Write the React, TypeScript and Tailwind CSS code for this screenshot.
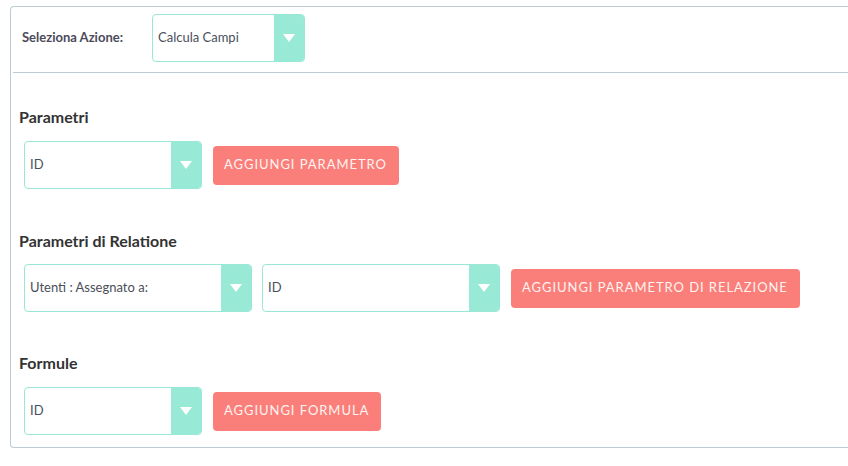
import React from "react";

const font = { fontFamily: "Lato, 'Noto Sans', sans-serif" };

function Select({ value, width }: { value: string; width: string }) {
  return (
    <div
      className={`flex h-[48px] ${width} overflow-hidden rounded-[4px] border border-[#98e8d5] bg-white`}
    >
      <div className="flex flex-1 items-center pl-[5px] text-[13px] text-[#4a4f5a]">
        {value}
      </div>
      <div className="flex w-[30px] items-center justify-center bg-[#98e9d6]">
        <svg width="12" height="8" viewBox="0 0 12 8">
          <path d="M0 0 H12 L6 8 Z" fill="#ffffff" />
        </svg>
      </div>
    </div>
  );
}

function AddButton({ label }: { label: string }) {
  return (
    <button className="h-[39px] rounded-[4px] bg-[#fa7f7a] pl-[11px] pr-[12px] text-[13px] tracking-[0.95px] text-[#fff3f1]">
      {label}
    </button>
  );
}

export default function App() {
  return (
    <div className="h-[466px] w-[848px] overflow-hidden bg-white" style={font}>
      <div className="ml-[10px] mt-[6px] w-[860px] rounded-bl-[4px] rounded-tl-[4px] border-b border-l border-t border-[#bccbd5]">
        {/* Header */}
        <div className="ml-[2px] flex h-[66px] items-start border-b border-[#bccbd5] pl-[9px] pt-[7px]">
          <div className="flex h-[48px] items-center">
            <div className="w-[130px] text-[13px] font-bold text-[#4a4a5a]">
              Seleziona Azione:
            </div>
            <Select value="Calcula Campi" width="w-[153px]" />
          </div>
        </div>

        {/* Body */}
        <div className="flex flex-col pb-[12px] pl-[8px] pt-[34px]">
          <h2 className="text-[16px] font-bold leading-[20px] text-[#333]">Parametri</h2>
          <div className="ml-[5px] mt-[14px] flex items-center gap-[11px]">
            <Select value="ID" width="w-[178px]" />
            <AddButton label="AGGIUNGI PARAMETRO" />
          </div>

          <h2 className="mt-[42px] text-[16px] font-bold leading-[20px] text-[#333]">
            Parametri di Relatione
          </h2>
          <div className="ml-[5px] mt-[13px] flex items-center gap-[10px]">
            <Select value="Utenti : Assegnato a:" width="w-[228px]" />
            <Select value="ID" width="w-[238px]" />
            <div className="ml-[1px]">
              <AddButton label="AGGIUNGI PARAMETRO DI RELAZIONE" />
            </div>
          </div>

          <h2 className="mt-[41px] text-[16px] font-bold leading-[20px] text-[#333]">Formule</h2>
          <div className="ml-[5px] mt-[14px] flex items-center gap-[11px]">
            <Select value="ID" width="w-[178px]" />
            <AddButton label="AGGIUNGI FORMULA" />
          </div>
        </div>
      </div>
    </div>
  );
}
